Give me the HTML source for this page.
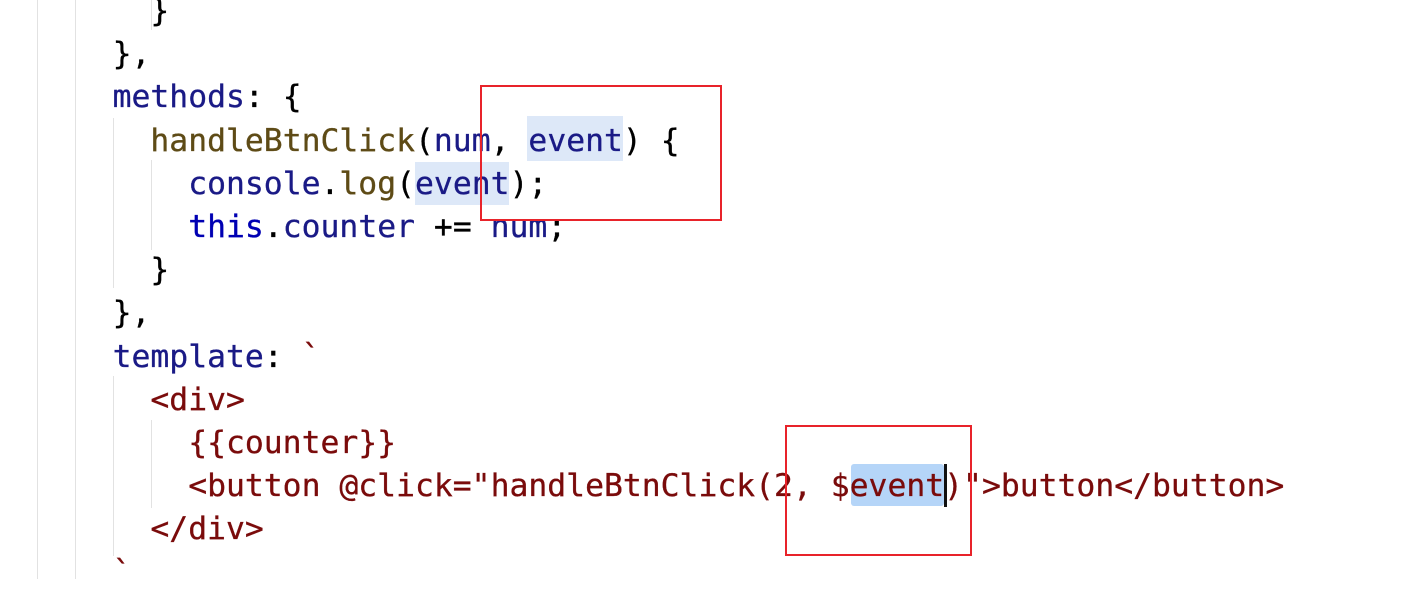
<!DOCTYPE html>
<html><head><meta charset="utf-8"><style>
body{margin:0;width:1417px;height:579px;background:#fff;overflow:hidden;position:relative}
.c{position:absolute;left:37px;top:-10px;font-family:"DejaVu Sans Mono","Liberation Mono",monospace;font-size:31.4px;line-height:43.2px;white-space:pre;color:#000;-webkit-text-stroke:0.3px currentColor}
.g{position:absolute;width:1px;background:#e2e2e2}
.k{color:#1a1a86}.f{color:#5e4b16}.t{color:#0000b3}.r{color:#7a0b0b}
.box{position:absolute;border:2px solid #e8232a}
.hl{position:absolute;background:#dde8f8}
</style></head><body>
<div class="g" style="left:37px;top:0;height:579px"></div>
<div class="g" style="left:75px;top:0;height:579px"></div>
<div class="g" style="left:113px;top:118px;height:170px"></div>
<div class="g" style="left:113px;top:376px;height:180px"></div>
<div class="g" style="left:151px;top:0;height:30px"></div>
<div class="g" style="left:151px;top:160px;height:90px"></div>
<div class="g" style="left:151px;top:420px;height:88px"></div>
<div class="hl" style="left:527px;top:116px;width:96px;height:45px"></div>
<div class="hl" style="left:415px;top:162px;width:94px;height:43px"></div>
<div class="hl" style="left:851px;top:464px;width:93px;height:42px;background:#b5d5f8;border-radius:3px"></div>
<div style="position:absolute;left:944px;top:464px;width:3px;height:43px;background:#111"></div>
<div class="c">      }
    },
    <span class="k">methods</span>: {
      <span class="f">handleBtnClick</span>(<span class="k">num</span>, <span class="k">event</span>) {
        <span class="k">console</span>.<span class="f">log</span>(<span class="k">event</span>);
        <span class="t">this</span>.<span class="k">counter</span> += <span class="k">num</span>;
      }
    },
    <span class="k">template</span>: <span class="r">`</span>
<span class="r">      &lt;div&gt;
        {{counter}}
        &lt;button @click="handleBtnClick(2, $event)"&gt;button&lt;/button&gt;
      &lt;/div&gt;
    `</span></div>
<div class="box" style="left:480px;top:85px;width:238px;height:132px"></div>
<div class="box" style="left:785px;top:425px;width:183px;height:127px"></div>
</body></html>
